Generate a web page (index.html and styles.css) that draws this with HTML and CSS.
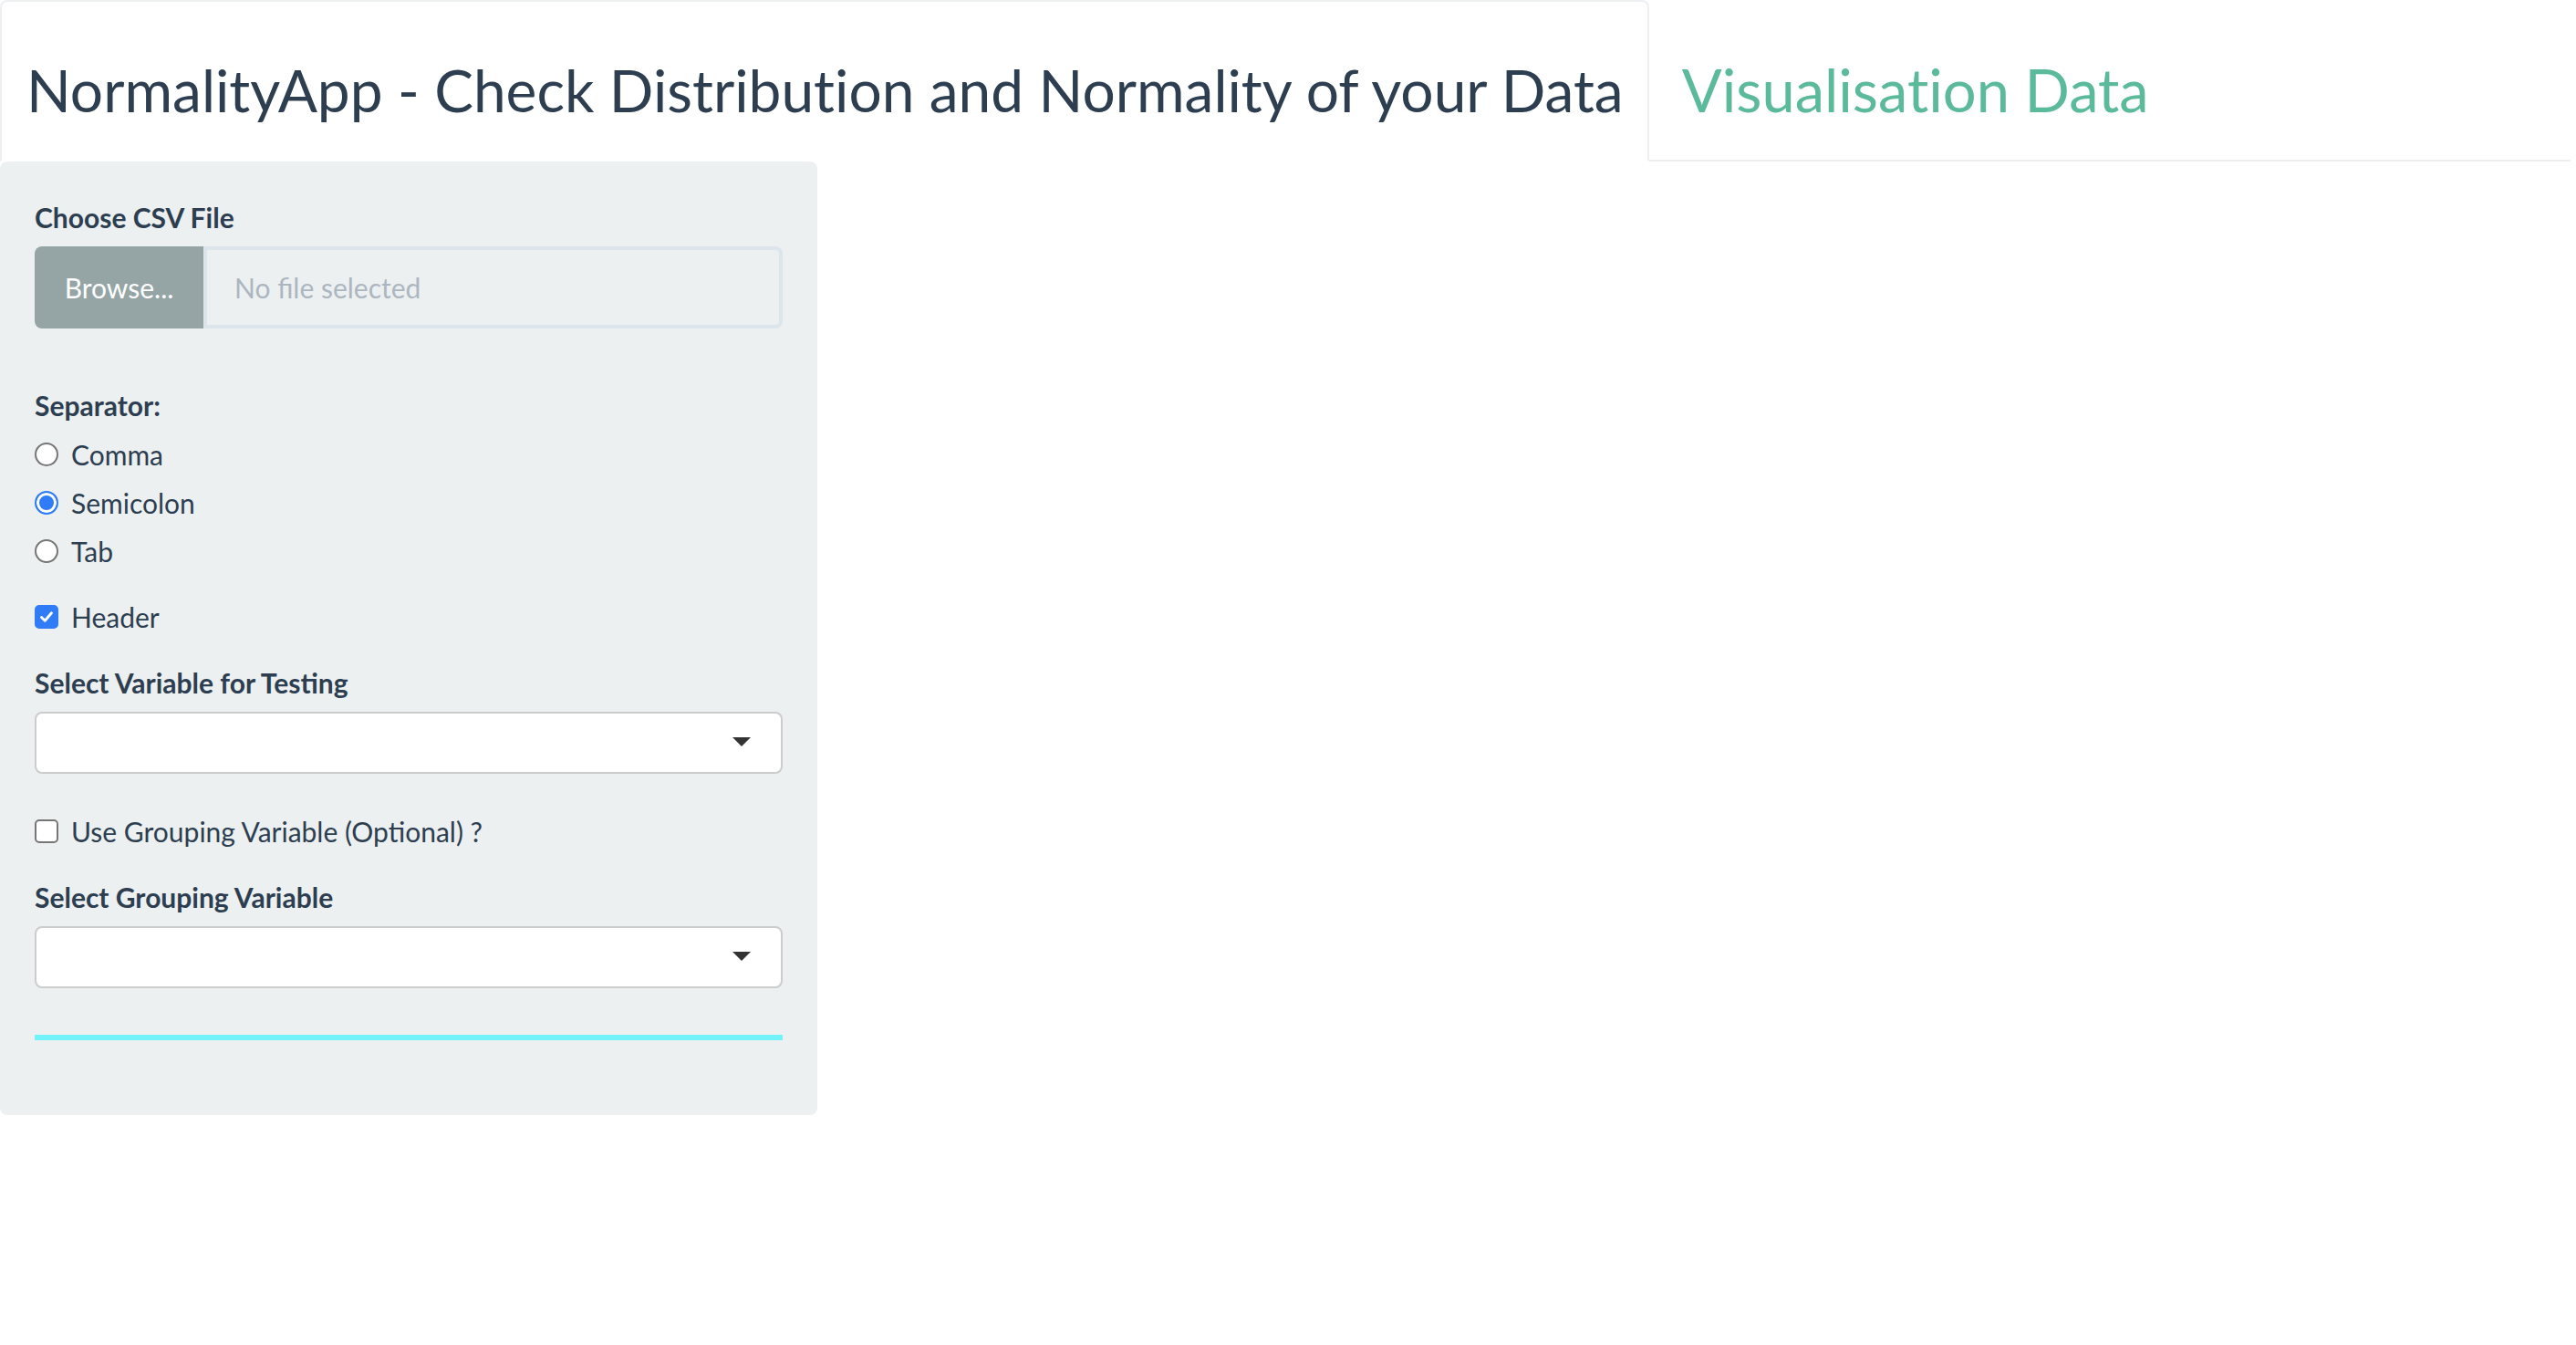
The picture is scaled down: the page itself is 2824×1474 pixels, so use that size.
FILE: index.html
```html
<!DOCTYPE html>
<html lang="en">
<head>
<meta charset="utf-8">
<title>NormalityApp</title>
<link rel="stylesheet" href="styles.css">
</head>
<body>
<ul class="tabs">
  <li class="tab active"><a class="tab-link">NormalityApp - Check Distribution and Normality of your Data</a></li>
  <li class="tab"><a class="tab-link">Visualisation Data</a></li>
</ul>
<div class="page">
  <form class="well">
    <div class="group">
      <label class="ctl-label">Choose CSV File</label>
      <div class="file-input">
        <span class="browse">Browse...</span>
        <span class="file-name">No file selected</span>
      </div>
    </div>

    <div class="group sep-group">
      <label class="ctl-label">Separator:</label>
      <label class="opt"><input type="radio" name="sep" class="rb"><span>Comma</span></label>
      <label class="opt"><input type="radio" name="sep" class="rb" checked><span>Semicolon</span></label>
      <label class="opt"><input type="radio" name="sep" class="rb"><span>Tab</span></label>
    </div>

    <label class="opt header-opt"><input type="checkbox" class="cb" checked><span>Header</span></label>

    <div class="group var-group">
      <label class="ctl-label">Select Variable for Testing</label>
      <div class="select"><span class="caret"></span></div>
    </div>

    <label class="opt group-opt"><input type="checkbox" class="cb"><span>Use Grouping Variable (Optional) ?</span></label>

    <div class="group var-group2">
      <label class="ctl-label">Select Grouping Variable</label>
      <div class="select"><span class="caret"></span></div>
    </div>

    <hr class="rule">
  </form>
</div>
</body>
</html>
```

FILE: styles.css
```css
* { box-sizing: border-box; }

body {
  margin: 0;
  background: #ffffff;
  color: #2c3e50;
  font-family: Lato, "Open Sans", sans-serif;
}

/* ---------- tabs ---------- */
.tabs {
  list-style: none;
  margin: 0;
  padding: 0;
  display: flex;
  width: 2818px;
  height: 177px;
  border-bottom: 2px solid #ecf0f1;
}

.tab {
  margin: 0 4px -2px 0;
}

.tab-link {
  display: block;
  font-size: 64px;
  line-height: 77px;
  padding: 58px 26px 38px 27px;
  border: 2px solid transparent;
  border-radius: 8px 8px 0 0;
  color: #5bba9a;
  white-space: nowrap;
  font-variant-ligatures: no-common-ligatures;
}

.tab:not(.active) .tab-link {
  padding-left: 30px;
  font-size: 65px;
}

.tab.active .tab-link {
  color: #2c3e50;
  background: #ffffff;
  border-color: #ecf0f1 #ecf0f1 transparent;
}

/* ---------- sidebar well ---------- */
.page {
  display: flex;
}

.well {
  width: 896px;
  margin: 0;
  padding: 40px 38px;
  background: #ecf0f1;
  border: 0;
  border-radius: 8px;
  display: flex;
  flex-direction: column;
}

.ctl-label {
  display: block;
  font-size: 30px;
  line-height: 43px;
  font-weight: 700;
  margin-bottom: 10px;
}

.file-input {
  display: flex;
  height: 90px;
}

.browse {
  width: 185px;
  display: flex;
  align-items: center;
  justify-content: center;
  background: #95a5a6;
  color: #ffffff;
  font-size: 30px;
  border-radius: 8px 0 0 8px;
}

.file-name {
  flex: 1;
  display: flex;
  align-items: center;
  padding-left: 30px;
  border: 4px solid #dce4ec;
  border-radius: 0 8px 8px 0;
  background: #ecf0f1;
  color: #acb6c0;
  font-size: 30px;
}

.sep-group {
  margin-top: 63px;
  display: flex;
  flex-direction: column;
  gap: 10px;
}

.sep-group .ctl-label {
  margin-bottom: 0;
}

.opt {
  display: flex;
  align-items: center;
  gap: 14px;
  height: 43px;
  font-size: 30px;
  font-weight: 400;
}

.header-opt {
  margin-top: 29px;
}

.var-group {
  margin-top: 30px;
}

.group-opt {
  margin-top: 41px;
}

.var-group2 {
  margin-top: 30px;
}

/* radio / checkbox */
.rb, .cb {
  appearance: none;
  -webkit-appearance: none;
  margin: 0;
  width: 26px;
  height: 26px;
  flex: none;
  background: #ffffff;
  border: 2px solid #767676;
}

.rb {
  border-radius: 50%;
}

.rb:checked {
  border-color: #2f7cf6;
  background: #2f7cf6;
  box-shadow: inset 0 0 0 3px #ffffff;
}

.cb {
  border-radius: 5px;
}

.cb:checked {
  border-color: #2f7cf6;
  background: #2f7cf6 url("data:image/svg+xml,%3Csvg xmlns='http://www.w3.org/2000/svg' viewBox='0 0 26 26'%3E%3Cpath d='M6.5 13.5l4.5 4.5 8.5-10' fill='none' stroke='%23fff' stroke-width='3.4' stroke-linecap='round' stroke-linejoin='round'/%3E%3C/svg%3E") center / 100% 100% no-repeat;
}

/* select */
.select {
  height: 68px;
  background: #ffffff;
  border: 2px solid #cccccc;
  border-radius: 8px;
  display: flex;
  align-items: center;
  justify-content: flex-end;
  padding-right: 33px;
}

.caret {
  width: 0;
  height: 0;
  border-left: 10px solid transparent;
  border-right: 10px solid transparent;
  border-top: 10px solid #333333;
  margin-top: -2px;
}

.rule {
  margin: 51px 0 42px;
  height: 6px;
  border: 0;
  background: #72f3f9;
}
```
